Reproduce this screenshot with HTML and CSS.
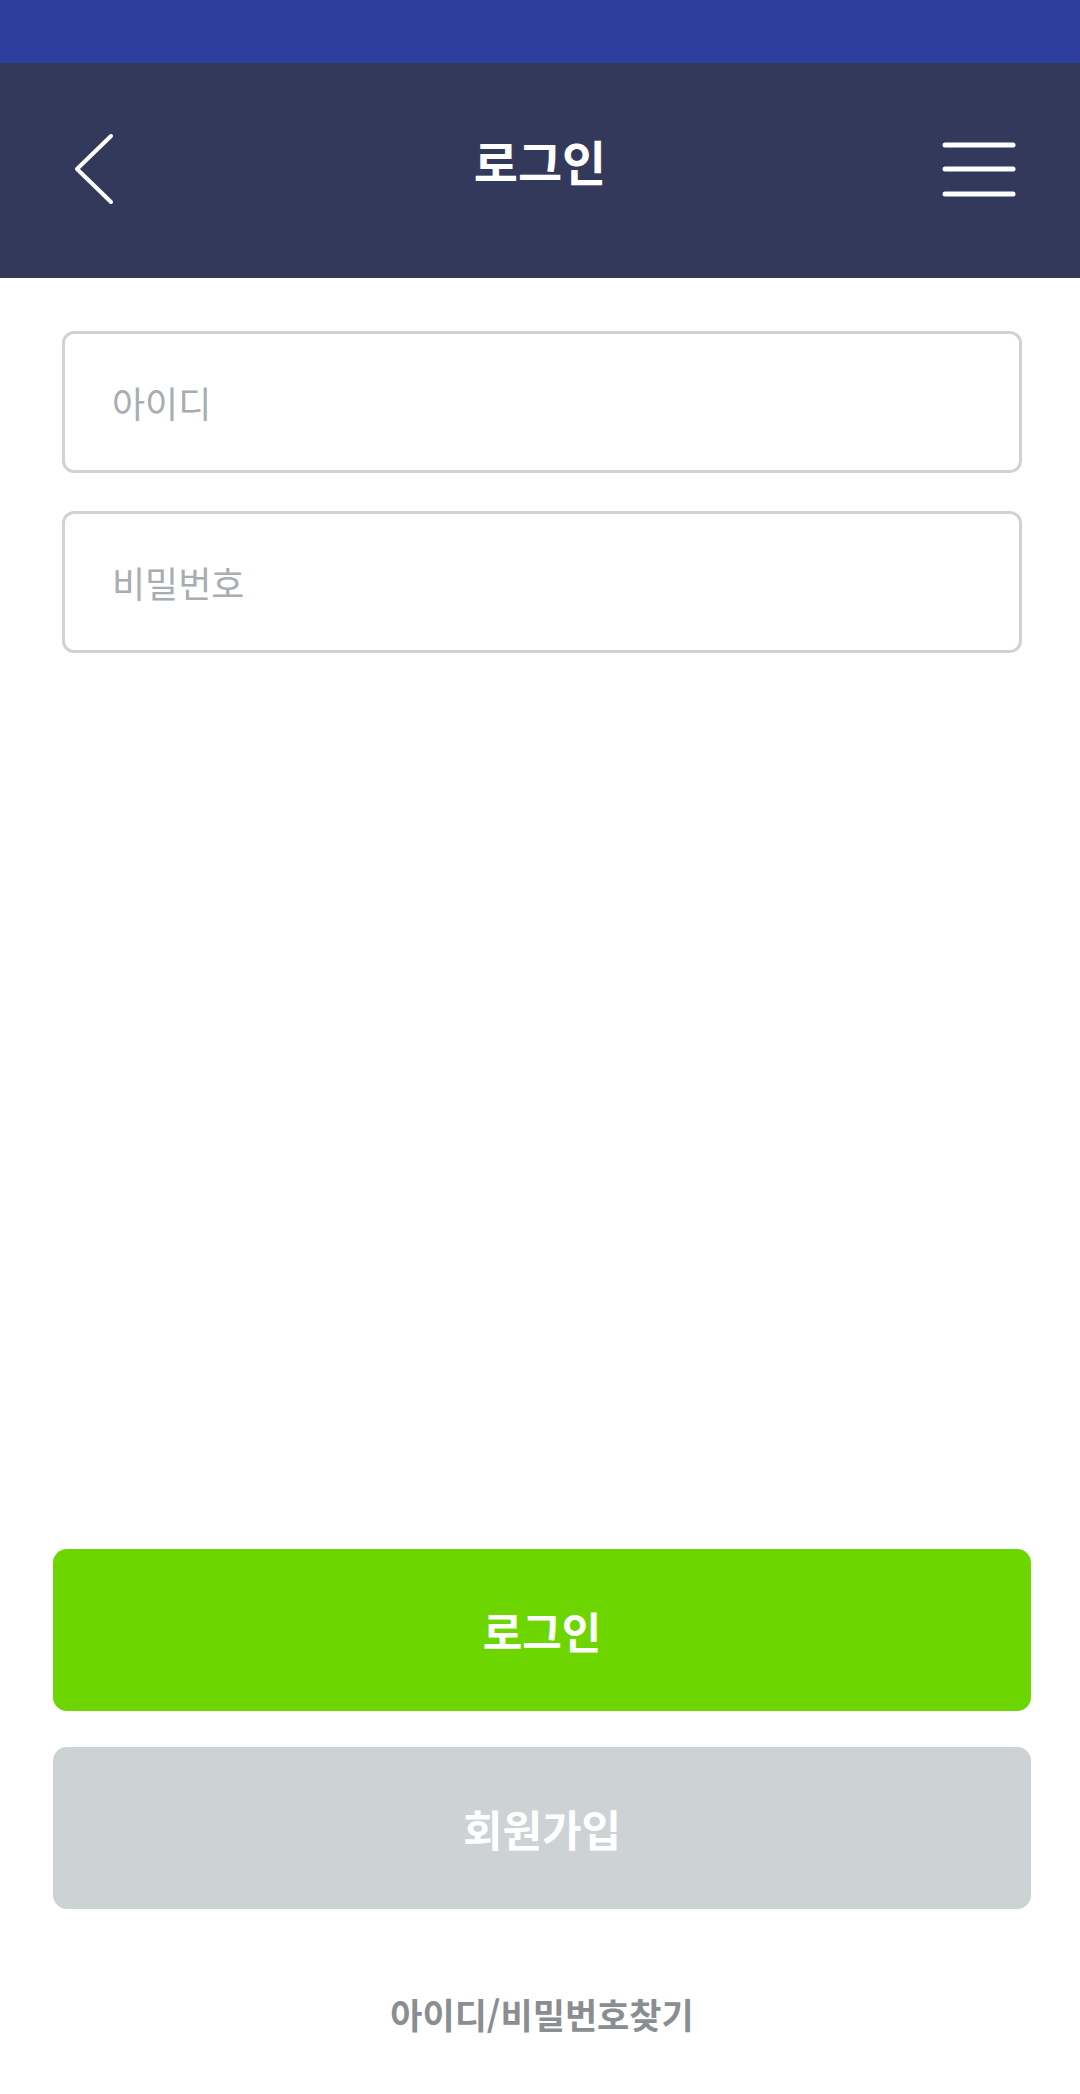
FILE: index.html
```html
<!DOCTYPE html>
<html lang="ko">
<head>
<meta charset="utf-8">
<title>로그인</title>
<link rel="stylesheet" href="styles.css">
</head>
<body>
<div class="page">
  <div class="statusbar"></div>
  <header class="appbar">
    <button class="icon-btn back" aria-label="뒤로">
      <svg width="44" height="72" viewBox="0 0 44 72">
        <polyline points="38,3 4,36 38,69" fill="none" stroke="#ffffff" stroke-width="4" stroke-linecap="round" stroke-linejoin="round"/>
      </svg>
    </button>
    <h1 class="title">로그인</h1>
    <button class="icon-btn menu" aria-label="메뉴">
      <svg width="74" height="60" viewBox="0 0 74 60">
        <line x1="3" y1="5" x2="71" y2="5" stroke="#ffffff" stroke-width="5" stroke-linecap="round"/>
        <line x1="3" y1="29" x2="71" y2="29" stroke="#ffffff" stroke-width="5" stroke-linecap="round"/>
        <line x1="3" y1="54" x2="71" y2="54" stroke="#ffffff" stroke-width="5" stroke-linecap="round"/>
      </svg>
    </button>
  </header>
  <main class="form">
    <input class="field" type="text" placeholder="아이디">
    <input class="field" type="password" placeholder="비밀번호">
  </main>
  <section class="actions">
    <button class="btn btn-primary">로그인</button>
    <button class="btn btn-secondary">회원가입</button>
    <a class="find-link" href="#">아이디/비밀번호찾기</a>
  </section>
</div>
</body>
</html>
```
FILE: styles.css
```css
* { box-sizing: border-box; }
html, body {
  margin: 0;
  padding: 0;
  background: #ffffff;
  font-family: "Noto Sans CJK KR", "Noto Sans", sans-serif;
}
.page {
  display: flex;
  flex-direction: column;
  height: 2094px;
}
.statusbar {
  height: 63px;
  background: #2e3e9e;
  flex: none;
}
.appbar {
  height: 215px;
  background: #33395b;
  display: grid;
  grid-template-columns: 1fr auto 1fr;
  align-items: center;
  flex: none;
}
.icon-btn {
  background: none;
  border: 0;
  padding: 0;
  display: flex;
  align-items: center;
  cursor: pointer;
}
.back {
  justify-self: start;
  margin-left: 73px;
  margin-bottom: 4px;
}
.menu {
  justify-self: end;
  margin-right: 64px;
  margin-bottom: 2px;
}
.title {
  margin: 0 0 22px;
  color: #ffffff;
  font-size: 48px;
  font-weight: 700;
  line-height: 1;
}
.form {
  display: flex;
  flex-direction: column;
  gap: 38px;
  padding: 53px 58px 0 62px;
}
.field {
  height: 142px;
  width: 100%;
  border: 3px solid #cfd3d6;
  border-radius: 12px;
  padding: 0 47px;
  font-family: "Noto Sans CJK KR", "Noto Sans", sans-serif;
  font-size: 36px;
  color: #333333;
  background: #ffffff;
  outline: none;
}
.field::placeholder {
  color: #a7adb1;
}
.actions {
  margin-top: auto;
  display: flex;
  flex-direction: column;
  padding: 0 49px 56px 53px;
}
.btn {
  height: 162px;
  border: 0;
  border-radius: 14px;
  color: #ffffff;
  font-family: "Noto Sans CJK KR", "Noto Sans", sans-serif;
  font-size: 43px;
  font-weight: 700;
  cursor: pointer;
}
.btn-primary {
  background: #6dd600;
}
.btn-secondary {
  background: #cdd2d5;
  margin-top: 36px;
}
.find-link {
  margin-top: 81px;
  line-height: 48px;
  text-align: center;
  color: #8a8e91;
  font-size: 35px;
  font-weight: 700;
  text-decoration: none;
}
```
